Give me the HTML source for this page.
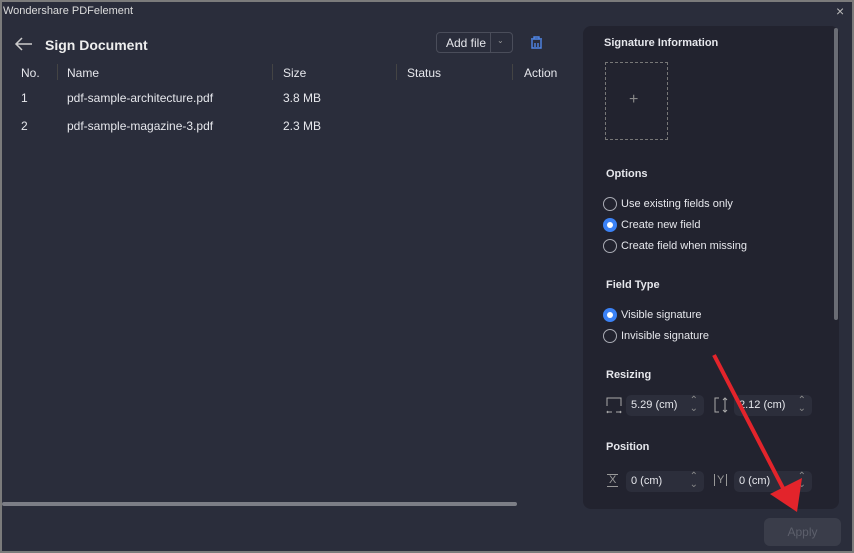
<!DOCTYPE html>
<html><head><meta charset="utf-8"><style>
*{margin:0;padding:0;box-sizing:border-box}
body{width:854px;height:553px;background:#7b7b7b;font-family:"Liberation Sans",sans-serif;color:#e6e7ec;overflow:hidden;position:relative}
.win{position:absolute;left:2px;top:2px;width:850px;height:549px;background:#2a2d3b}
.a{position:absolute;white-space:nowrap}
.t{font-size:12px}
.panel{position:absolute;left:583px;top:26px;width:256px;height:483px;background:#22232f;border-radius:8px}
.radio{position:absolute;width:14px;height:14px;border:1.5px solid #a9abb4;border-radius:50%}
.radio.on{border:none;background:#3b82f6}
.radio.on::after{content:"";position:absolute;left:4px;top:4px;width:6px;height:6px;border-radius:50%;background:#fff}
.inp{position:absolute;height:21px;width:78px;background:#2c2e3b;border-radius:5px;font-size:11px;padding:4px 0 0 5px}
.sp{position:absolute;right:6px;top:2px;font-size:10px;color:#888;line-height:8px}
</style></head><body>
<div class="win"></div>
<div class="a" style="left:3px;top:5px;font-size:11px;color:#ddd">Wondershare PDFelement</div>
<div class="a" style="left:836px;top:3px;font-size:14px;color:#bbb">×</div>
<svg class="a" style="left:14px;top:36px" width="20" height="16"><path d="M18 8H2M8 2L2 8l6 6" stroke="#ccc" stroke-width="1.5" fill="none"/></svg>
<div class="a" style="left:45px;top:37px;font-size:14px;font-weight:bold;color:#eee">Sign Document</div>
<div class="a" style="left:436px;top:32px;width:77px;height:21px;border:1px solid #4a4d5a;border-radius:4px"></div>
<div class="a" style="left:490px;top:32px;width:1px;height:21px;background:#4a4d5a"></div>
<div class="a t" style="left:446px;top:36px">Add file</div>
<div class="a" style="left:497px;top:36px;font-size:8px;color:#999">⌄</div>
<svg class="a" style="left:529px;top:35px" width="15" height="15"><path d="M2 4h11M5 4V2h5v2M3 5v8h9V5M6 8v4M9 8v4" stroke="#4f86e8" stroke-width="1.4" fill="none"/></svg>
<div class="a t" style="left:21px;top:66px">No.</div>
<div class="a" style="left:57px;top:64px;width:1px;height:16px;background:#444"></div>
<div class="a t" style="left:67px;top:66px">Name</div>
<div class="a" style="left:272px;top:64px;width:1px;height:16px;background:#444"></div>
<div class="a t" style="left:283px;top:66px">Size</div>
<div class="a" style="left:396px;top:64px;width:1px;height:16px;background:#444"></div>
<div class="a t" style="left:407px;top:66px">Status</div>
<div class="a" style="left:512px;top:64px;width:1px;height:16px;background:#444"></div>
<div class="a t" style="left:524px;top:66px">Action</div>
<div class="a t" style="left:21px;top:91px">1</div>
<div class="a t" style="left:67px;top:91px">pdf-sample-architecture.pdf</div>
<div class="a t" style="left:283px;top:91px">3.8 MB</div>
<div class="a t" style="left:21px;top:119px">2</div>
<div class="a t" style="left:67px;top:119px">pdf-sample-magazine-3.pdf</div>
<div class="a t" style="left:283px;top:119px">2.3 MB</div>
<div class="a" style="left:2px;top:502px;width:515px;height:4px;background:#7c7e86;border-radius:2px"></div>
<div class="panel"></div>
<div class="a" style="left:834px;top:28px;width:4px;height:292px;background:#6a6c74;border-radius:2px"></div>
<div class="a t" style="left:604px;top:37px;font-weight:bold;font-size:11px">Signature Information</div>
<div class="a" style="left:605px;top:62px;width:63px;height:78px;border:1px dashed #777"></div>
<div class="a" style="left:629px;top:91px;font-size:16px;color:#888">+</div>
<div class="a t" style="left:606px;top:168px;font-size:11px;font-weight:bold">Options</div>
<div class="radio" style="left:603px;top:197px"></div><div class="a t" style="left:621px;top:198px;font-size:11px">Use existing fields only</div>
<div class="radio on" style="left:603px;top:218px"></div><div class="a t" style="left:621px;top:219px;font-size:11px">Create new field</div>
<div class="radio" style="left:603px;top:239px"></div><div class="a t" style="left:621px;top:240px;font-size:11px">Create field when missing</div>
<div class="a t" style="left:606px;top:279px;font-size:11px;font-weight:bold">Field Type</div>
<div class="radio on" style="left:603px;top:308px"></div><div class="a t" style="left:621px;top:309px;font-size:11px">Visible signature</div>
<div class="radio" style="left:603px;top:329px"></div><div class="a t" style="left:621px;top:330px;font-size:11px">Invisible signature</div>
<div class="a t" style="left:606px;top:369px;font-size:11px;font-weight:bold">Resizing</div>
<svg class="a" style="left:605px;top:396px" width="18" height="18"><path d="M2 10V2h14v8M2 16h5M11 16h5M3 15l-1 1 1 1M15 15l1 1-1 1" stroke="#aaa" fill="none"/></svg>
<div class="inp" style="left:626px;top:395px">5.29 (cm)<div class="sp">⌃<br>⌄</div></div>
<svg class="a" style="left:713px;top:396px" width="18" height="18"><path d="M6 2H2v14h4M12 2v14M10 4l2-2 2 2M10 14l2 2 2-2" stroke="#aaa" fill="none"/></svg>
<div class="inp" style="left:734px;top:395px">2.12 (cm)<div class="sp">⌃<br>⌄</div></div>
<div class="a t" style="left:606px;top:441px;font-size:11px;font-weight:bold">Position</div>
<div class="a" style="left:607px;top:474px;font-size:11px;color:#999;border-top:1px solid #999;border-bottom:1px solid #999;line-height:11px;padding:0 2px">X</div>
<div class="inp" style="left:626px;top:471px">0 (cm)<div class="sp">⌃<br>⌄</div></div>
<div class="a" style="left:714px;top:474px;font-size:11px;color:#999;border-left:1px solid #999;border-right:1px solid #999;line-height:12px;padding:0 2px">Y</div>
<div class="inp" style="left:734px;top:471px">0 (cm)<div class="sp">⌃<br>⌄</div></div>
<div class="a" style="left:764px;top:518px;width:77px;height:28px;background:#3a3d4a;border-radius:6px;color:#5c5f6b;font-size:12px;text-align:center;line-height:28px">Apply</div>
<svg class="a" style="left:700px;top:350px" width="140" height="170"><path d="M14 5L84 140" stroke="#e3242b" stroke-width="4"/><path d="M70 144L97 162L102 128Z" fill="#e3242b"/></svg>
</body></html>
